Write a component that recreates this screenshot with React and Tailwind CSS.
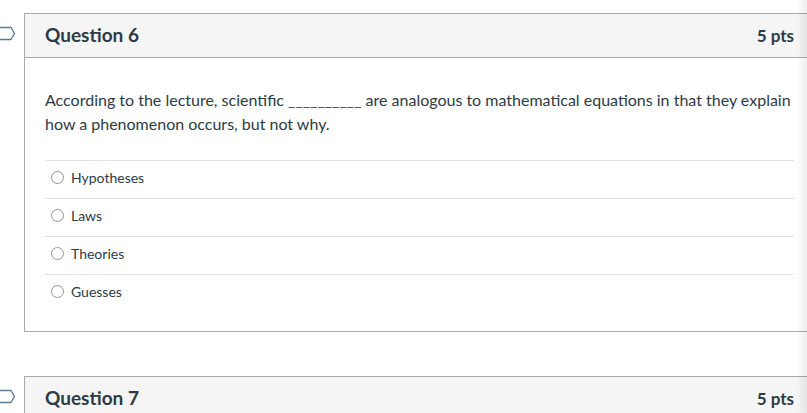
import React from "react";

function Flag() {
  return (
    <svg width="16" height="16" viewBox="0 0 16 16" className="block">
      <path
        d="M-2 1.5 H11 L14.5 7.5 L11 13.5 H-2"
        fill="none"
        stroke="#5a7b97"
        strokeWidth="1.4"
        strokeLinejoin="round"
      />
    </svg>
  );
}

function Radio() {
  return (
    <span className="inline-block w-[13px] h-[13px] rounded-full border border-[#939393] bg-white shrink-0" />
  );
}

function Option({ label }) {
  return (
    <div className="flex items-center h-[38px] border-t border-[#e2e2e2] pl-[6px] pb-[5px]">
      <Radio />
      <span className="ml-[7px] text-[14px] text-[#2d3b45]">{label}</span>
    </div>
  );
}

export default function App() {
  return (
    <div
      className="relative w-[807px] h-[413px] overflow-hidden bg-white"
      style={{ fontFamily: "Lato, 'Open Sans', sans-serif" }}
    >
      <div className="pt-[13px] flex flex-col gap-[44px]">
        <div className="flex items-start">
          <div className="w-[24px] pt-[13px] shrink-0">
            <Flag />
          </div>
          <div className="w-[791px] shrink-0 border border-[#a9a9a9]">
            <div className="h-[44px] bg-[#f5f5f5] border-b border-[#a9a9a9] flex items-center justify-between px-[20px]">
              <span className="text-[19px] font-bold text-[#2d3b45]">Question 6</span>
              <span className="text-[17px] font-bold text-[#2d3b45]">5 pts</span>
            </div>
            <div className="px-[20px] pt-[30px] pb-[19px]">
              <p className="text-[16px] leading-[24px] text-[#2d3b45] mb-[24px]">
                According to the lecture, scientific <span className="text-[#555]">__________</span> are analogous to mathematical equations in that they explain how a phenomenon occurs, but not why.
              </p>
              <Option label="Hypotheses" />
              <Option label="Laws" />
              <Option label="Theories" />
              <Option label="Guesses" />
            </div>
          </div>
        </div>
        <div className="flex items-start">
          <div className="w-[24px] pt-[13px] shrink-0">
            <Flag />
          </div>
          <div className="w-[791px] shrink-0 border border-[#a9a9a9]">
            <div className="h-[44px] bg-[#f5f5f5] border-b border-[#a9a9a9] flex items-center justify-between px-[20px]">
              <span className="text-[19px] font-bold text-[#2d3b45]">Question 7</span>
              <span className="text-[17px] font-bold text-[#2d3b45]">5 pts</span>
            </div>
          </div>
        </div>
      </div>
      <div className="absolute top-0 right-0 w-[10px] h-full bg-gradient-to-r from-transparent to-[rgba(0,0,0,0.07)]" />
    </div>
  );
}
